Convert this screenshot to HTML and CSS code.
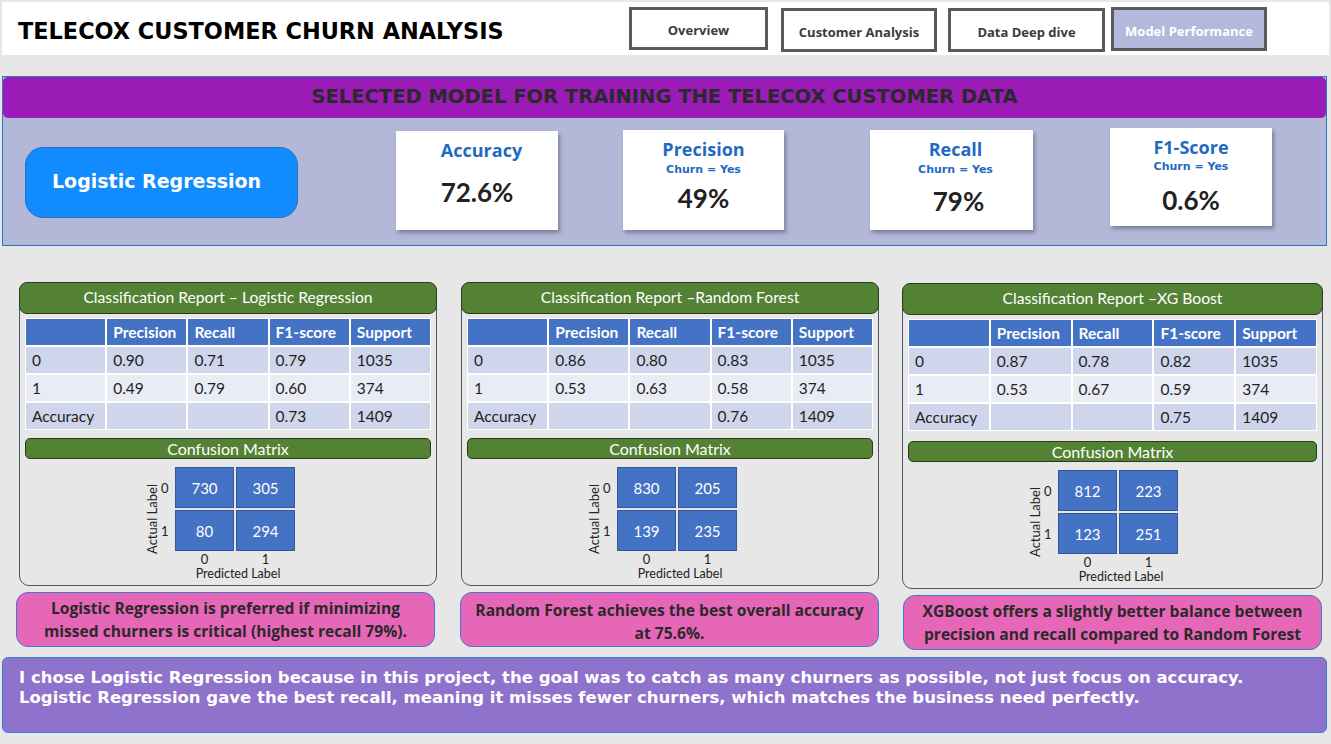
FILE: index.html
```html
<!DOCTYPE html>
<html lang="en">
<head>
<meta charset="utf-8">
<title>Telecox Customer Churn Analysis</title>
<link rel="stylesheet" href="styles.css">
</head>
<body>
<header class="topbar">
  <h1 class="title">TELECOX CUSTOMER CHURN ANALYSIS</h1>
  <nav class="nav">
    <div class="nav-btn nb-overview">Overview</div>
    <div class="nav-btn nb-customer">Customer Analysis</div>
    <div class="nav-btn nb-deep">Data Deep dive</div>
    <div class="nav-btn nb-model">Model Performance</div>
  </nav>
</header>

<section class="banner">
  <div class="banner-title">SELECTED MODEL FOR TRAINING THE TELECOX CUSTOMER DATA</div>
  <div class="kpi-row">
    <div class="model-pill">Logistic Regression</div>
    <div class="kpi kpi-acc">
      <div class="kpi-title">Accuracy</div>
      <div class="kpi-value">72.6%</div>
    </div>
    <div class="kpi kpi-prec">
      <div class="kpi-title">Precision</div>
      <div class="kpi-sub">Churn = Yes</div>
      <div class="kpi-value">49%</div>
    </div>
    <div class="kpi kpi-rec">
      <div class="kpi-title">Recall</div>
      <div class="kpi-sub">Churn = Yes</div>
      <div class="kpi-value">79%</div>
    </div>
    <div class="kpi kpi-f1">
      <div class="kpi-title">F1-Score</div>
      <div class="kpi-sub">Churn = Yes</div>
      <div class="kpi-value">0.6%</div>
    </div>
  </div>
</section>

<section class="reports">
  <div class="col col-lr">
    <div class="report">
      <div class="report-head">Classification Report – Logistic Regression</div>
      <div class="ctable">
        <div class="th"></div><div class="th">Precision</div><div class="th">Recall</div><div class="th">F1-score</div><div class="th">Support</div>
        <div class="td dk">0</div><div class="td dk">0.90</div><div class="td dk">0.71</div><div class="td dk">0.79</div><div class="td dk">1035</div>
        <div class="td lt">1</div><div class="td lt">0.49</div><div class="td lt">0.79</div><div class="td lt">0.60</div><div class="td lt">374</div>
        <div class="td dk">Accuracy</div><div class="td dk"></div><div class="td dk"></div><div class="td dk">0.73</div><div class="td dk">1409</div>
      </div>
      <div class="cm-head">Confusion Matrix</div>
      <div class="cm">
        <div class="cm-axis-y">Actual Label</div>
        <div class="cm-grid">
          <div class="cm-rl">0</div><div class="cm-cell">730</div><div class="cm-cell">305</div>
          <div class="cm-rl">1</div><div class="cm-cell">80</div><div class="cm-cell">294</div>
          <div></div><div class="cm-cl">0</div><div class="cm-cl">1</div>
          <div></div><div class="cm-xl">Predicted Label</div>
        </div>
      </div>
    </div>
    <div class="note note-lr">Logistic Regression is preferred if minimizing<br>missed churners is critical (highest recall 79%).</div>
  </div>

  <div class="col col-rf">
    <div class="report">
      <div class="report-head">Classification Report –Random Forest</div>
      <div class="ctable">
        <div class="th"></div><div class="th">Precision</div><div class="th">Recall</div><div class="th">F1-score</div><div class="th">Support</div>
        <div class="td dk">0</div><div class="td dk">0.86</div><div class="td dk">0.80</div><div class="td dk">0.83</div><div class="td dk">1035</div>
        <div class="td lt">1</div><div class="td lt">0.53</div><div class="td lt">0.63</div><div class="td lt">0.58</div><div class="td lt">374</div>
        <div class="td dk">Accuracy</div><div class="td dk"></div><div class="td dk"></div><div class="td dk">0.76</div><div class="td dk">1409</div>
      </div>
      <div class="cm-head">Confusion Matrix</div>
      <div class="cm">
        <div class="cm-axis-y">Actual Label</div>
        <div class="cm-grid">
          <div class="cm-rl">0</div><div class="cm-cell">830</div><div class="cm-cell">205</div>
          <div class="cm-rl">1</div><div class="cm-cell">139</div><div class="cm-cell">235</div>
          <div></div><div class="cm-cl">0</div><div class="cm-cl">1</div>
          <div></div><div class="cm-xl">Predicted Label</div>
        </div>
      </div>
    </div>
    <div class="note note-rf">Random Forest achieves the best overall accuracy<br>at 75.6%.</div>
  </div>

  <div class="col col-xg">
    <div class="report report-xg">
      <div class="report-head">Classification Report –XG Boost</div>
      <div class="ctable">
        <div class="th"></div><div class="th">Precision</div><div class="th">Recall</div><div class="th">F1-score</div><div class="th">Support</div>
        <div class="td dk">0</div><div class="td dk">0.87</div><div class="td dk">0.78</div><div class="td dk">0.82</div><div class="td dk">1035</div>
        <div class="td lt">1</div><div class="td lt">0.53</div><div class="td lt">0.67</div><div class="td lt">0.59</div><div class="td lt">374</div>
        <div class="td dk">Accuracy</div><div class="td dk"></div><div class="td dk"></div><div class="td dk">0.75</div><div class="td dk">1409</div>
      </div>
      <div class="cm-head">Confusion Matrix</div>
      <div class="cm">
        <div class="cm-axis-y">Actual Label</div>
        <div class="cm-grid">
          <div class="cm-rl">0</div><div class="cm-cell">812</div><div class="cm-cell">223</div>
          <div class="cm-rl">1</div><div class="cm-cell">123</div><div class="cm-cell">251</div>
          <div></div><div class="cm-cl">0</div><div class="cm-cl">1</div>
          <div></div><div class="cm-xl">Predicted Label</div>
        </div>
      </div>
    </div>
    <div class="note note-xg">XGBoost offers a slightly better balance between<br>precision and recall compared to Random Forest</div>
  </div>
</section>

<section class="summary">I chose Logistic Regression because in this project, the goal was to catch as many churners as possible, not just focus on accuracy.<br>Logistic Regression gave the best recall, meaning it misses fewer churners, which matches the business need perfectly.</section>
</body>
</html>
```

FILE: styles.css
```css
* { box-sizing: border-box; }

html, body { margin: 0; padding: 0; }

body {
  width: 1331px;
  height: 744px;
  overflow: hidden;
  padding-top: 2px;
  background: #e7e7e7;
  font-family: "Lato", "Liberation Sans", sans-serif;
  color: #222;
}

/* ---------- top bar ---------- */
.topbar {
  display: flex;
  align-items: flex-start;
  height: 53px;
  margin: 0 2px;
  background: #fff;
}

.title {
  align-self: center;
  margin: 0;
  padding: 4px 0 0 16px;
  font-family: "DejaVu Sans", sans-serif;
  font-weight: bold;
  font-size: 22.4px;
  line-height: 26px;
  color: #000;
}

.nav {
  display: flex;
  align-items: flex-start;
  margin-left: auto;
  margin-right: 62px;
  padding-top: 5px;
}

.nav-btn {
  display: flex;
  align-items: center;
  justify-content: center;
  height: 44px;
  padding-top: 3px;
  border: 3px solid #5a5a5a;
  background: #fff;
  font-family: "Open Sans", sans-serif;
  font-weight: 700;
  font-size: 13px;
  color: #3b3b3b;
}

.nb-overview { width: 139px; height: 43px; }
.nb-customer { width: 156px; margin-left: 13px; margin-top: 1px; }
.nb-deep { width: 157px; margin-left: 11px; margin-top: 1px; }
.nb-model { width: 156px; margin-left: 6px; background: #b4b9dc; color: #fff; }

/* ---------- banner ---------- */
.banner {
  width: 1325px;
  height: 170px;
  margin: 21px 0 0 2px;
  border: 1px solid #2e74c4;
  background: #b4b8d8;
}

.banner-title {
  display: flex;
  align-items: center;
  justify-content: center;
  height: 41px;
  padding-bottom: 2px;
  border-radius: 5px;
  background: #9b1bb6;
  font-family: "DejaVu Sans", sans-serif;
  font-weight: bold;
  font-size: 19.5px;
  color: #2a2a2a;
}

.kpi-row {
  display: flex;
  align-items: flex-start;
}

.model-pill {
  display: flex;
  align-items: center;
  width: 273px;
  height: 71px;
  margin: 29px 0 0 22px;
  padding: 0 0 3px 26px;
  border: 1px solid #2b6fc0;
  border-radius: 18px;
  background: #128bfe;
  font-family: "DejaVu Sans", sans-serif;
  font-weight: bold;
  font-size: 19px;
  color: #fff;
}

.kpi {
  display: flex;
  flex-direction: column;
  align-items: center;
  padding-top: 8px;
  background: #fff;
  box-shadow: 2px 3px 4px rgba(60, 60, 80, 0.45);
}

.kpi-title {
  font-family: "Open Sans", sans-serif;
  font-weight: 700;
  font-size: 18px;
  line-height: 22px;
  color: #1f6bc1;
}

.kpi-sub {
  margin-top: 3px;
  font-family: "DejaVu Sans", sans-serif;
  font-weight: bold;
  font-size: 11px;
  line-height: 13px;
  color: #1f6bc1;
}

.kpi-value {
  font-family: "Lato", sans-serif;
  font-weight: 700;
  font-size: 26px;
  line-height: 30px;
  color: #222;
}

.kpi-acc { width: 162px; height: 99px; margin: 13px 0 0 98px; }
.kpi-acc .kpi-title { padding-left: 9px; }
.kpi-acc .kpi-value { margin-top: 16px; }

.kpi-prec { width: 161px; height: 100px; margin: 12px 0 0 65px; }
.kpi-prec .kpi-value { margin-top: 7px; }

.kpi-rec { width: 163px; height: 100px; margin: 12px 0 0 86px; padding-left: 8px; }
.kpi-rec .kpi-value { margin-top: 10px; padding-left: 6px; }

.kpi-f1 { width: 162px; height: 98px; margin: 10px 0 0 77px; }
.kpi-f1 .kpi-sub { margin-top: 2px; }
.kpi-f1 .kpi-value { margin-top: 12px; }

/* ---------- reports ---------- */
.reports {
  display: flex;
  align-items: flex-start;
  margin-top: 36px;
  padding-left: 19px;
}

.col {
  display: flex;
  flex-direction: column;
  width: 418px;
}

.col-rf { margin-left: 24px; }
.col-xg { margin-left: 23px; width: 421px; }

.report {
  padding-bottom: 5px;
  border: 1px solid #4d5669;
  border-radius: 10px;
}

.report-xg { margin-top: 1px; }

.report-head {
  display: flex;
  align-items: center;
  justify-content: center;
  height: 32px;
  margin: -1px -1px 0;
  padding-bottom: 3px;
  border: 1px solid #2c3b20;
  border-radius: 8px;
  background: #548235;
  font-size: 15.7px;
  color: #fff;
}

.ctable {
  display: grid;
  grid-template-columns: repeat(5, 1fr);
  grid-auto-rows: 26px;
  gap: 2px;
  margin: 4px 5px 0;
  padding: 1px;
  background: #fff;
}

.th, .td {
  display: flex;
  align-items: center;
  padding-left: 6px;
  font-size: 15.5px;
}

.th {
  background: #4472c4;
  color: #fff;
  font-weight: 700;
}

.td { color: #1f1f1f; }
.td.dk { background: #cfd5ea; }
.td.lt { background: #e9ebf5; }

.cm-head {
  display: flex;
  align-items: center;
  justify-content: center;
  height: 21px;
  margin: 8px 5px 0;
  border: 1px solid #2c3b20;
  border-radius: 5px;
  background: #548235;
  font-size: 16px;
  color: #fff;
}

.report-xg .cm-head { margin-top: 10px; }

.cm {
  display: flex;
  align-items: flex-start;
  margin-top: 8px;
  padding-left: 125px;
}

.cm-axis-y {
  width: 15px;
  height: 84px;
  margin-top: 10px;
  writing-mode: vertical-rl;
  transform: rotate(180deg);
  text-align: center;
  font-size: 13px;
  line-height: 15px;
  color: #222;
}

.cm-grid {
  display: grid;
  grid-template-columns: 13px 59px 59px;
  grid-template-rows: 41px 41px 12px 13px;
  gap: 2px;
}

.cm-rl {
  display: flex;
  align-items: center;
  padding-left: 1px;
  font-size: 13px;
  color: #222;
}

.cm-cell {
  display: flex;
  align-items: center;
  justify-content: center;
  border: 1px solid #33589a;
  background: #4472c4;
  font-size: 15px;
  color: #fff;
}

.cm-cl {
  text-align: center;
  font-size: 13px;
  line-height: 13px;
  color: #222;
}

.cm-xl {
  grid-column: 2 / 4;
  padding-left: 6px;
  text-align: center;
  font-size: 12.5px;
  line-height: 13px;
  white-space: nowrap;
  color: #222;
}

/* ---------- notes ---------- */
.note {
  width: 419px;
  height: 55px;
  margin-top: 6px;
  padding-top: 4px;
  border: 1px solid #3d7ad0;
  border-radius: 12px;
  background: #e667b8;
  text-align: center;
  font-family: "Open Sans", sans-serif;
  font-weight: 700;
  font-size: 15.6px;
  line-height: 23px;
  color: #2a2a2a;
}

.note-lr { margin-left: -3px; }
.note-rf { margin-left: -1px; padding-top: 6px; }
.note-xg { margin-left: 1px; }

/* ---------- summary ---------- */
.summary {
  width: 1325px;
  height: 76px;
  margin: 7px 0 0 2px;
  padding: 10px 16px 0;
  border: 1px solid #3d7ad0;
  border-radius: 6px;
  background: #8e72cc;
  font-family: "DejaVu Sans", sans-serif;
  font-weight: bold;
  font-size: 16.5px;
  line-height: 20px;
  color: #fff;
}
```
